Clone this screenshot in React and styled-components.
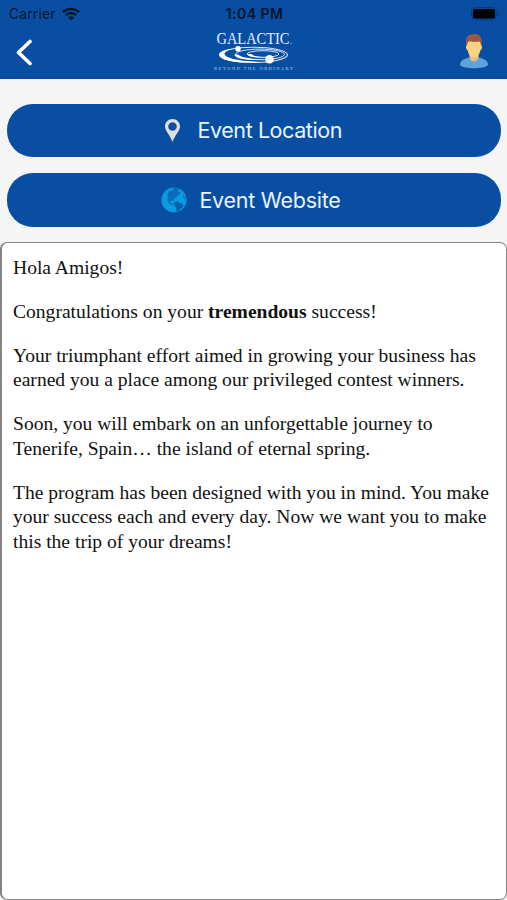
import React from 'react';
import styled, { createGlobalStyle } from 'styled-components';

const GlobalStyle = createGlobalStyle`
  body {
    margin: 0;
    background: #f5f5f5;
  }

  * {
    box-sizing: border-box;
  }
`;

const Screen = styled.div`
  display: flex;
  flex-direction: column;
  width: 507px;
  height: 900px;
  overflow: hidden;
  background: #f5f5f5;
`;

const Header = styled.header`
  height: 79px;
  background: #084fa4;
  border-bottom: 1px solid #05489c;
`;

const StatusBar = styled.div`
  display: grid;
  grid-template-columns: 1fr auto 1fr;
  align-items: center;
  height: 27px;
  padding: 0 7px 0 9px;
  font-family: Inter, sans-serif;
  color: #03142e;
`;

const Carrier = styled.div`
  display: flex;
  align-items: center;
  gap: 6px;
  font-size: 13.8px;
  letter-spacing: 0.2px;
`;

const Clock = styled.div`
  font-weight: 600;
  font-size: 14px;
  letter-spacing: 0.45px;
`;

const Battery = styled.svg`
  justify-self: end;
`;

const NavBar = styled.div`
  display: grid;
  grid-template-columns: 1fr auto 1fr;
  align-items: start;
  height: 51px;
  padding: 3px 18px 0 16px;
`;

const BackIcon = styled.svg`
  margin-top: 9px;
`;

const Avatar = styled.svg`
  justify-self: end;
  margin-top: 3px;
`;

const Actions = styled.div`
  display: flex;
  flex-direction: column;
  gap: 16px;
  padding: 24.5px 6px 0 7px;
`;

const ActionButton = styled.button`
  display: flex;
  align-items: center;
  justify-content: center;
  gap: ${(props) => props.$gap}px;
  height: 53.5px;
  padding: 0 ${(props) => props.$inset}px 0 0;
  border: none;
  border-radius: 26px;
  background: #084fa4;
  color: #e8f3ff;
  font-family: Inter, sans-serif;
  font-size: 21.5px;
  letter-spacing: ${(props) => props.$spacing}px;
`;

const Message = styled.article`
  flex: 1;
  margin-top: 15.5px;
  padding: 12.6px 0 0 11px;
  border: 1.5px solid #858585;
  border-left-width: 2px;
  border-radius: 7px;
  background: #fff;
  color: #111;
  font-family: 'Liberation Serif', serif;
  font-size: 19.57px;
  line-height: 24.5px;
  white-space: nowrap;

  p {
    margin: 0 0 19.6px;
  }
`;

const WifiIcon = () => (
  <svg width="18" height="14" viewBox="0 0 18 14" fill="none" stroke="#03142e">
    <path d="M1 5.2C5.4.9 12.6.9 17 5.2" strokeWidth="2.5" />
    <path d="M3.8 8.2c2.9-2.8 7.5-2.8 10.4 0" strokeWidth="2.3" />
    <path d="M9 13.5 5.9 10.4c1.7-1.6 4.5-1.6 6.2 0Z" fill="#03142e" stroke="none" />
  </svg>
);

const Logo = () => (
  <svg width="82" height="44" viewBox="0 0 82 44" overflow="visible">
    <text x="4.5" y="14" fontFamily="Liberation Serif, serif" fontSize="17" fill="#e6f1ff" textLength="73" lengthAdjust="spacingAndGlyphs">
      GALACTIC
    </text>
    <circle cx="79" cy="13.3" r="0.6" fill="#b9d2f0" />
    <g fill="none" stroke="#d5e6fa">
      <ellipse cx="41.5" cy="24.8" rx="34" ry="7.6" strokeWidth="1.1" />
      <ellipse cx="48" cy="24.4" rx="24.500" ry="5.300" strokeWidth="1" />
      <ellipse cx="51" cy="24" rx="16" ry="3.300" strokeWidth="1" />
    </g>
    <path d="M7.300 24.500c0 6 16 9.300 44 7.600C32 31.500 13.500 29 12.500 24c0-2 3-4 9-5.300C13 19.500 7.300 21.500 7.300 24.500Z" fill="#fff" />
    <path d="M22.500 24.500c0 4.300 14 6.200 30 4.800-13-.3-25-1.700-26-4.800Z" fill="#fff" />
    <path d="M36 24c0 2.800 8 4 18 3.200-8-.3-14-1.200-14-3.200Z" fill="#fff" />
    <circle cx="26" cy="18.800" r="2.800" fill="#fff" />
    <circle cx="57.500" cy="29.300" r="4.300" fill="#fff" />
    <text x="2" y="40" fontFamily="Liberation Serif, serif" fontSize="4.500" fill="#b6d0f0" textLength="79">
      BEYOND THE ORDINARY
    </text>
  </svg>
);

const PinIcon = () => (
  <svg width="17" height="25" viewBox="0 0 17 25">
    <path
      d="M8.500 1C4.300 1 1 4.300 1 8.400 1 13 6 16.500 8.500 24 11 16.500 16 13 16 8.400 16 4.300 12.700 1 8.500 1Zm0 3.200a4.300 4.300 0 1 1 0 8.600 4.300 4.300 0 0 1 0-8.600Z"
      fill="#dfdfdf"
      fillRule="evenodd"
    />
  </svg>
);

const GlobeIcon = () => (
  <svg width="26" height="26" viewBox="0 0 26 26">
    <circle cx="13" cy="13" r="12.5" fill="#079be2" />
    <g fill="#0b5dae">
      <path d="m12.500 1 3.500-.2 2 1.200-1.500 2.300 2.600 1 .6 2.200-2.800.5-1.800 2.500-2.300 1.300.3 2.200-1.900-.8-2.200 1 .8 1.800 2.200.9-.4 1.300-3-1.500-2.200-3 .6-3.200L6.300 7l2-3 3.500-.5Z" opacity="0.75" />
      <path d="m13 15.300 2.600-1 3 1.500 3.800 1.700-1 3-2.500 1.700-1.700 2.600-1.600-.4-.4-3.700-2.300-2.700Z" />
      <path d="m22.500 7 1.700 2.500.6 3.300-1.800-.6-1.300-2.700Z" opacity="0.5" />
    </g>
  </svg>
);

const AvatarIcon = () => (
  <Avatar width="30" height="36" viewBox="0 0 30 36">
    <path d="M1 32c0-4.500 4-6.100 9-7.500h10c5 1.400 9 3 9 7.500C25.500 36.300 4.500 36.300 1 32Z" fill="#5ba5dc" />
    <path d="M10.500 19h9v6c-1.700 4.600-7.300 4.600-9 0Z" fill="#efbd70" />
    <path d="M8 7.500h14l.3 5c1.300.4.700 4.100-.8 4.500-.8 4.400-3.300 7.700-6.500 7.700S9.300 21.400 8.500 17c-1.500-.4-2.100-4.100-.8-4.500Z" fill="#fbd184" />
    <path d="M7.700 13C6 6 8 1.200 14.300 1.200c6.500-.8 9.900 4 8 11.800l-1.500-4.500c-2.500.5-8.800.5-11.300 0C8.600 10 8.300 11 7.700 13Z" fill="#9d5842" />
  </Avatar>
);

const PARAGRAPHS = [
  ['Hola Amigos!'],
  [<>Congratulations on your <b>tremendous</b> success!</>],
  ['Your triumphant effort aimed in growing your business has', 'earned you a place among our privileged contest winners.'],
  ['Soon, you will embark on an unforgettable journey to', 'Tenerife, Spain… the island of eternal spring.'],
  ['The program has been designed with you in mind. You make', 'your success each and every day. Now we want you to make', 'this the trip of your dreams!'],
];

const App = () => {
  return (
    <>
      <GlobalStyle />
      <Screen>
        <Header>
          <StatusBar>
            <Carrier>
              Carrier
              <WifiIcon />
            </Carrier>
            <Clock>1:04 PM</Clock>
            <Battery width="29" height="14" viewBox="0 0 29 14">
              <rect x="0.7" y="0.7" width="24.6" height="12" rx="3.5" fill="none" stroke="#073775" />
              <rect x="2" y="2" width="22" height="9.5" rx="2" fill="#000208" />
              <path d="M27 4.5c2 .8 2 3.7 0 4.5Z" fill="#073775" />
            </Battery>
          </StatusBar>
          <NavBar>
            <BackIcon width="18" height="27" viewBox="0 0 18 27" fill="none" stroke="#fff" strokeWidth="3.6" strokeLinecap="round" strokeLinejoin="round">
              <path d="M14 2.5 2.500 13.500l11.500 11" />
            </BackIcon>
            <Logo />
            <AvatarIcon />
          </NavBar>
        </Header>
        <Actions>
          <ActionButton $gap={16.5} $spacing={-0.42} $inset={2}>
            <PinIcon />
            Event Location
          </ActionButton>
          <ActionButton $gap={12} $spacing={-0.27} $inset={6}>
            <GlobeIcon />
            Event Website
          </ActionButton>
        </Actions>
        <Message>
          {PARAGRAPHS.map((lines, index) => (
            <p key={index}>
              {lines.map((line, i) => (
                <React.Fragment key={i}>
                  {i > 0 && <br />}
                  {line}
                </React.Fragment>
              ))}
            </p>
          ))}
        </Message>
      </Screen>
    </>
  );
};

export default App;
